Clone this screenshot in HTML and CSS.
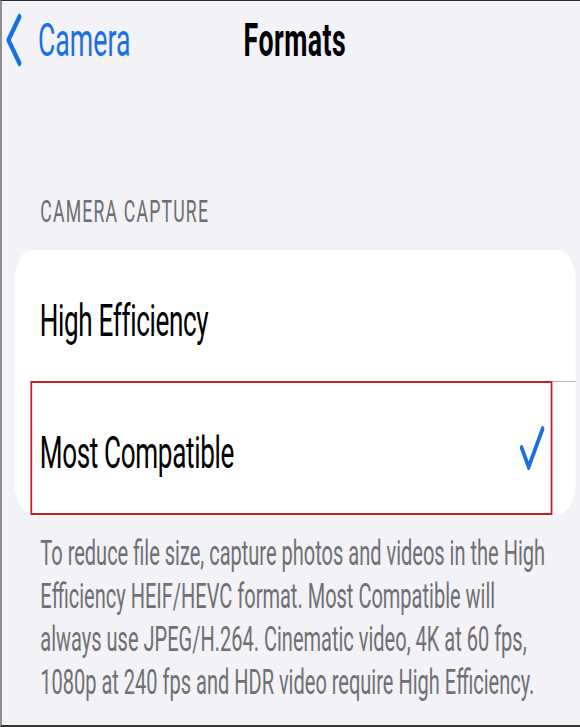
FILE: index.html
```html
<!DOCTYPE html>
<html>
<head>
<meta charset="utf-8">
<link rel="stylesheet" href="styles.css">
</head>
<body>
<div class="frame">
  <div class="stage">
    <header class="nav">
      <div class="back">
        <svg class="chevron" width="30" height="54" viewBox="0 0 30 54"><polyline points="24,4 5,27 24,50" fill="none" stroke="#1a6fe3" stroke-width="6.5" stroke-linecap="round" stroke-linejoin="round"/></svg>
        <span class="back-label">Camera</span>
      </div>
      <h1 class="title">Formats</h1>
      <div></div>
    </header>
    <div class="section-header">CAMERA CAPTURE</div>
    <div class="card">
      <div class="row">
        <div class="row-inner sep"><span class="label">High Efficiency</span></div>
      </div>
      <div class="row selected">
        <div class="row-inner"><span class="label">Most Compatible</span>
          <svg class="check" width="44" height="46" viewBox="0 0 44 46"><polyline points="4,23 16,42 40,4" fill="none" stroke="#1a6fe3" stroke-width="6" stroke-linecap="round" stroke-linejoin="round"/></svg>
        </div>
        <div class="highlight"></div>
      </div>
    </div>
    <p class="footer">To reduce file size, capture photos and videos in the High<br>Efficiency HEIF/HEVC format. Most Compatible will<br>always use JPEG/H.264. Cinematic video, 4K at 60 fps,<br>1080p at 240 fps and HDR video require High Efficiency.</p>
  </div>
</div>
</body>
</html>
```
FILE: styles.css
```css
html, body {
  margin: 0;
  padding: 0;
  overflow: hidden;
  background: #f2f2f7;
}
.frame {
  box-sizing: border-box;
  width: 580px;
  height: 727px;
  border-left: 2px solid #8e8e93;
  border-top: 1px solid #2a2a2a;
  border-bottom: 2px solid #333;
  background: #f2f2f7;
  overflow: hidden;
}
.stage {
  width: 996px;
  transform: scaleX(0.58);
  transform-origin: 0 0;
  font-family: Roboto, "Liberation Sans", sans-serif;
}
.nav {
  display: grid;
  grid-template-columns: 1fr auto 1fr;
  align-items: center;
  height: 56px;
  padding-top: 11px;
}
.back {
  display: flex;
  align-items: center;
  padding-left: 6px;
}
.chevron {
  display: block;
  margin-right: 26px;
}
.back-label {
  color: #1a6fe3;
  font-size: 46px;
  line-height: 56px;
}
.title {
  margin: 0 0 0 14px;
  font-size: 46px;
  font-weight: 700;
  letter-spacing: 0.8px;
  line-height: 56px;
  color: #000;
}
.section-header {
  margin-top: 126px;
  padding-left: 66px;
  font-size: 30.5px;
  line-height: 36px;
  color: #6d6d72;
  letter-spacing: 2px;
}
.card {
  margin: 20px 7px 0 22px;
  background: #fff;
  border-radius: 30px;
}
.row {
  position: relative;
  padding-left: 43px;
}
.row-inner {
  display: flex;
  align-items: center;
  justify-content: space-between;
  height: 132px;
  box-sizing: border-box;
  padding-top: 9px;
  padding-right: 53px;
}
.row-inner.sep {
  border-bottom: 1px solid #b8b8bc;
}
.label {
  font-size: 45px;
  line-height: 47px;
  letter-spacing: -0.6px;
  color: #000;
}
.check {
  display: block;
  margin-top: -9px;
}
.highlight {
  position: absolute;
  left: 27px;
  right: 40px;
  top: -1px;
  bottom: -1px;
  border-style: solid;
  border-color: #c81e22;
  border-width: 2px 3.4px;
}
.footer {
  margin: 18px 0 0 0;
  padding-left: 66px;
  font-size: 34.5px;
  line-height: 43px;
  color: #707075;
}
```
